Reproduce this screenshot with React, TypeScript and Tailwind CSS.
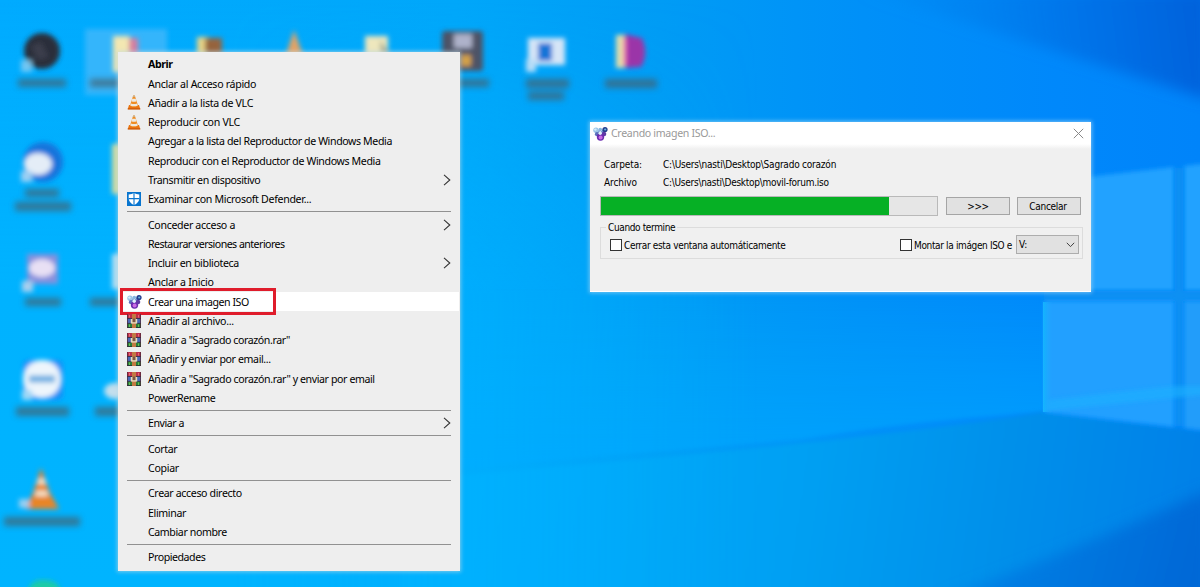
import type { ReactNode } from "react";

const menuFont = "font-['Noto_Sans','Open_Sans',sans-serif]";
const dialogFont = "font-['DejaVu_Sans_Condensed','DejaVu_Sans',sans-serif]";

function Wallpaper() {
  return (
    <svg className="absolute inset-0" width="1200" height="587" viewBox="0 0 1200 587" preserveAspectRatio="none">
      <defs>
        <linearGradient id="sky" x1="0" x2="1" y1="0" y2="0">
          <stop offset="0" stopColor="#00abff" />
          <stop offset=".38" stopColor="#00a7fa" />
          <stop offset=".55" stopColor="#009cf5" />
          <stop offset=".72" stopColor="#0090f8" />
          <stop offset=".88" stopColor="#0088fb" />
          <stop offset="1" stopColor="#0084fa" />
        </linearGradient>
        <linearGradient id="glow" x1="0" x2="0" y1="0" y2="1">
          <stop offset="0" stopColor="#00b2ff" stopOpacity="0" />
          <stop offset="1" stopColor="#00a6ff" stopOpacity=".75" />
        </linearGradient>
        <linearGradient id="floor" x1="400" x2="1200" y1="430" y2="540" gradientUnits="userSpaceOnUse">
          <stop offset="0" stopColor="#00b0ff" />
          <stop offset=".5" stopColor="#00a0f3" />
          <stop offset=".75" stopColor="#0090ea" />
          <stop offset="1" stopColor="#0080e8" />
        </linearGradient>
        <linearGradient id="corner" x1="880" x2="1200" y1="60" y2="20" gradientUnits="userSpaceOnUse">
          <stop offset="0" stopColor="#0088f0" stopOpacity=".2" />
          <stop offset=".6" stopColor="#0075ea" />
          <stop offset="1" stopColor="#0062dc" />
        </linearGradient>
        <linearGradient id="lower" x1="980" x2="1200" y1="530" y2="587" gradientUnits="userSpaceOnUse">
          <stop offset="0" stopColor="#0082e6" />
          <stop offset="1" stopColor="#0067d6" />
        </linearGradient>
        <linearGradient id="leftGlow" x1="0" x2="0" y1="0" y2="1">
          <stop offset="0" stopColor="#00b6ff" stopOpacity="0" />
          <stop offset=".5" stopColor="#00b2ff" />
          <stop offset="1" stopColor="#00b4ff" />
        </linearGradient>
        <linearGradient id="fade" x1="0" x2="1" y1="0" y2="0">
          <stop offset="0" stopColor="#fff" />
          <stop offset=".3" stopColor="#fff" />
          <stop offset="1" stopColor="#fff" stopOpacity="0" />
        </linearGradient>
        <linearGradient id="edge" x1="0" x2="1" y1="0" y2="0">
          <stop offset="0" stopColor="#16bfff" />
          <stop offset="1" stopColor="#20a4ff" stopOpacity="0" />
        </linearGradient>
        <mask id="leftMask">
          <rect width="760" height="587" fill="url(#fade)" />
        </mask>
        <filter id="soft" x="-10%" y="-10%" width="120%" height="120%">
          <feGaussianBlur stdDeviation="2" />
        </filter>
        <filter id="softer" x="-20%" y="-20%" width="140%" height="140%">
          <feGaussianBlur stdDeviation="7" />
        </filter>
      </defs>
      <rect width="1200" height="587" fill="url(#sky)" />
      <path d="M860 -10 L1210 100 V-10Z" fill="url(#corner)" filter="url(#softer)" />
      <path d="M440 290 H1044 V412 Q900 422 800 440 L440 470Z" fill="url(#glow)" filter="url(#soft)" />
      <path d="M400 480 Q860 442 1044 412 L1210 432 V600 H400Z" fill="url(#floor)" filter="url(#soft)" />
      <path d="M940 600 Q1080 548 1210 490 V600Z" fill="url(#lower)" filter="url(#softer)" />
      <rect width="760" height="587" fill="url(#leftGlow)" mask="url(#leftMask)" />
      <path d="M1044 182 L1174 167 V291 H1044Z" fill="#20a2ff" filter="url(#soft)" />
      <path d="M1184 166 L1210 163 V291 H1184Z" fill="#20a2ff" filter="url(#soft)" />
      <path d="M1044 291 H1210 V301 H1044Z M1175 168 H1183 V426 H1175Z" fill="#1090f3" filter="url(#soft)" />
      <path d="M1044 301 H1174 V427 L1044 412Z" fill="#20a0ff" filter="url(#soft)" />
      <path d="M1184 301 H1210 V431 L1184 428Z" fill="#209dfa" filter="url(#soft)" />
      <path d="M1048 400 L1174 386 H1210 V394 L1046 411Z" fill="#1cb2ff" opacity=".6" filter="url(#soft)" />
      <rect x="1043" y="302" width="10" height="110" fill="url(#edge)" opacity=".8" />
    </svg>
  );
}

function DesktopIcons() {
  return (
    <svg className="absolute inset-0" width="1200" height="587" viewBox="0 0 1200 587">
      <defs>
        <filter id="iconBlur" x="-20%" y="-20%" width="140%" height="140%">
          <feGaussianBlur stdDeviation="2.8" />
        </filter>
        <filter id="labelBlur" x="-20%" y="-60%" width="140%" height="220%">
          <feGaussianBlur stdDeviation="3" />
        </filter>
      </defs>
      <rect x="85" y="29" width="82" height="66" fill="#42b8fb" opacity=".8" filter="url(#iconBlur)" />
      <g filter="url(#iconBlur)">
        <circle cx="42" cy="51" r="18" fill="#2b2d3a" />
        <path d="M31 46 L41 42 L49 57 L38 60Z" fill="#3a3d4c" />
        <rect x="21" y="60" width="11" height="12" fill="#8dcdf0" opacity=".8" />
        <rect x="113" y="36" width="17" height="36" fill="#f3e7b2" />
        <rect x="129" y="38" width="9" height="20" fill="#d67ea0" />
        <rect x="197" y="37" width="12" height="24" fill="#e8d488" />
        <rect x="205" y="38" width="17" height="20" fill="#96643d" />
        <path d="M294 30 L304 58 H285Z" fill="#e5a363" />
        <rect x="365" y="36" width="23" height="24" fill="#eee7bd" />
        <path d="M380 40 L390 54 H381Z" fill="#a6aa94" />
        <rect x="442" y="31" width="41" height="40" rx="3" fill="#4d5266" />
        <rect x="454" y="34" width="18" height="14" fill="#aeb2ca" />
        <rect x="461" y="55" width="10" height="11" fill="#d6a347" />
        <rect x="528" y="38" width="37" height="27" fill="#d5e5f7" />
        <rect x="538" y="43" width="14" height="18" fill="#1675d7" />
        <rect x="526" y="59" width="10" height="13" fill="#b7ddf7" />
        <rect x="616" y="35" width="11" height="33" fill="#e5dfaa" />
        <path d="M624 34 L642 38 Q649 54 641 67 L624 68Z" fill="#9b35a8" />
        <path d="M625 39 V65" stroke="#ef5aae" strokeWidth="3" />
        <circle cx="43" cy="162" r="20" fill="#1675db" />
        <ellipse cx="38" cy="164" rx="14" ry="11" fill="#e4edf7" />
        <rect x="21" y="171" width="11" height="11" fill="#9bcff3" />
        <rect x="27" y="254" width="31" height="30" fill="#8790dd" />
        <ellipse cx="42" cy="268" rx="13" ry="9" fill="#e8e0f4" />
        <rect x="22" y="281" width="11" height="11" fill="#a9cfee" />
        <rect x="23" y="360" width="40" height="40" rx="5" fill="#148ff5" />
        <circle cx="42" cy="379" r="19" fill="#edf5fc" />
        <path d="M29 379 H55" stroke="#6eafe2" strokeWidth="7" />
        <rect x="22" y="390" width="10" height="10" fill="#a0d8f6" />
        <path d="M41 468 L50 493 L59 509 H25 L33 493Z" fill="#e88526" />
        <path d="M38 479 H45 L46 484 H37Z M36 491 H47 L48 496 H35Z" fill="#f5e8cf" />
        <rect x="19" y="499" width="10" height="9" fill="#9acff1" />
        <path d="M28 595 Q28 580 43 580 Q61 580 61 595Z" fill="#1bcba6" />
        <rect x="112" y="144" width="12" height="50" fill="#d4dc9f" />
        <rect x="112" y="254" width="12" height="35" fill="#b3def1" />
        <ellipse cx="115" cy="391" rx="11" ry="8" fill="#c4dfed" />
      </g>
      <g fill="#456070" opacity=".72" filter="url(#labelBlur)">
        <rect x="18" y="79" width="48" height="8" />
        <rect x="90" y="79" width="40" height="8" />
        <rect x="452" y="79" width="37" height="8" />
        <rect x="526" y="79" width="43" height="9" />
        <rect x="528" y="92" width="36" height="8" />
        <rect x="605" y="79" width="52" height="9" />
        <rect x="25" y="189" width="34" height="8" />
        <rect x="15" y="202" width="56" height="9" />
        <rect x="25" y="298" width="36" height="8" />
        <rect x="90" y="298" width="35" height="8" />
        <rect x="16" y="407" width="53" height="9" />
        <rect x="95" y="407" width="30" height="9" />
        <rect x="4" y="517" width="76" height="9" />
      </g>
    </svg>
  );
}

function ConeIcon() {
  return (
    <svg width="14" height="15" viewBox="0 0 14 15">
      <path d="M2 10 H12 L13.3 14.2 H.7Z" fill="#ea7410" />
      <path d="M6.2 .5 H7.8 L11.2 11 Q7 13 2.8 11Z" fill="#f08d24" />
      <path d="M5.3 3.7 H8.7 L9.5 6.2 Q7 7.2 4.5 6.2Z M3.9 8.4 Q7 9.7 10.1 8.4 L10.8 10.4 Q7 12.2 3.2 10.4Z" fill="#eee9de" />
      <path d="M6.2 .5 H7.8 L8.2 2 H5.8Z" fill="#c9b18d" />
      <path d="M.8 13.2 H13.2 V14.5 H.8Z" fill="#cd5b0b" />
    </svg>
  );
}

function DefenderIcon() {
  return (
    <svg width="14" height="14" viewBox="0 0 14 14">
      <rect width="14" height="14" fill="#0875cf" />
      <path d="M7 1 Q9 2.4 12.3 2.5 V7 Q11.5 11 7 13 Q2.5 11 1.7 7 V2.5 Q5 2.4 7 1Z" fill="#fff" />
      <path d="M7 1 V13 M1.5 6.6 H12.5" stroke="#0875cf" strokeWidth="1.1" />
    </svg>
  );
}

function IsoIcon() {
  return (
    <svg width="15" height="15" viewBox="0 0 15 15">
      <path d="M3 4 L7.5 8 L12 3.5 M7.5 8 V12" stroke="#6f8fd0" strokeWidth="3" fill="none" />
      <circle cx="3" cy="4.3" r="2.7" fill="#9cc6e8" />
      <circle cx="2.4" cy="3.6" r="1.2" fill="#d8eefb" />
      <circle cx="7.3" cy="3.6" r="1.8" fill="#86b6df" />
      <circle cx="12" cy="3.5" r="2.6" fill="#233b8e" />
      <circle cx="12.2" cy="3.5" r="1.1" fill="#66b4dc" />
      <circle cx="4" cy="8.2" r="2.1" fill="#5a70bd" />
      <circle cx="11" cy="8" r="2.3" fill="#5f3ca4" />
      <circle cx="7.5" cy="11" r="3.7" fill="#6b2daf" />
      <circle cx="7.6" cy="11.4" r="2" fill="#ca6be5" />
      <circle cx="7.2" cy="7.2" r="1.7" fill="#dff2fc" />
    </svg>
  );
}

function RarIcon() {
  return (
    <svg width="14" height="14" viewBox="0 0 14 14">
      <rect width="14" height="4.6" fill="#bc304a" />
      <rect y="4.6" width="14" height="4.8" fill="#4b69b6" />
      <rect y="9.4" width="14" height="4.6" fill="#278039" />
      <path d="M0 4.5 H14 M0 9.4 H14 M0 13.6 H14" stroke="#26253b" strokeWidth=".8" />
      <path d="M.4 0 V14 M13.6 0 V14" stroke="#4c2738" strokeWidth=".8" />
      <rect x="5" width="4" height="14" fill="#c17a43" />
      <rect x="3.8" y="5" width="6.4" height="4.6" fill="#e9ddbd" />
      <rect x="5.5" y="4.6" width="3" height="3.6" fill="#7d5540" />
      <path d="M2.5 1 V3.6 M11.5 1 V3.6" stroke="#e16b78" />
      <path d="M2.5 10.4 V13 M11.5 10.4 V13" stroke="#69bd56" />
    </svg>
  );
}

type Item = { label: string; tracking: string; icon?: ReactNode; arrow?: boolean; bold?: boolean; active?: boolean };

const groups: Item[][] = [
  [
    { label: "Abrir", tracking: "tracking-[-0.45px]", bold: true },
    { label: "Anclar al Acceso rápido", tracking: "tracking-[-0.3px]" },
    { label: "Añadir a la lista de VLC", tracking: "tracking-[-0.31px]", icon: <ConeIcon /> },
    { label: "Reproducir con VLC", tracking: "tracking-[-0.27px]", icon: <ConeIcon /> },
    { label: "Agregar a la lista del Reproductor de Windows Media", tracking: "tracking-[-0.38px]" },
    { label: "Reproducir con el Reproductor de Windows Media", tracking: "tracking-[-0.36px]" },
    { label: "Transmitir en dispositivo", tracking: "tracking-[-0.39px]", arrow: true },
    { label: "Examinar con Microsoft Defender...", tracking: "tracking-[-0.31px]", icon: <DefenderIcon /> },
  ],
  [
    { label: "Conceder acceso a", tracking: "tracking-[-0.33px]", arrow: true },
    { label: "Restaurar versiones anteriores", tracking: "tracking-[-0.53px]" },
    { label: "Incluir en biblioteca", tracking: "tracking-[-0.34px]", arrow: true },
    { label: "Anclar a Inicio", tracking: "tracking-[-0.3px]" },
    { label: "Crear una imagen ISO", tracking: "tracking-[-0.45px]", icon: <IsoIcon />, active: true },
    { label: "Añadir al archivo...", tracking: "tracking-[-0.3px]", icon: <RarIcon /> },
    { label: 'Añadir a "Sagrado corazón.rar"', tracking: "tracking-[-0.41px]", icon: <RarIcon /> },
    { label: "Añadir y enviar por email...", tracking: "tracking-[-0.38px]", icon: <RarIcon /> },
    { label: 'Añadir a "Sagrado corazón.rar" y enviar por email', tracking: "tracking-[-0.4px]", icon: <RarIcon /> },
    { label: "PowerRename", tracking: "tracking-[-0.45px]" },
  ],
  [{ label: "Enviar a", tracking: "tracking-[-0.45px]", arrow: true }],
  [
    { label: "Cortar", tracking: "tracking-[-0.38px]" },
    { label: "Copiar", tracking: "tracking-[-0.3px]" },
  ],
  [
    { label: "Crear acceso directo", tracking: "tracking-[-0.36px]" },
    { label: "Eliminar", tracking: "tracking-[-0.35px]" },
    { label: "Cambiar nombre", tracking: "tracking-[-0.39px]" },
  ],
  [{ label: "Propiedades", tracking: "tracking-[-0.45px]" }],
];

function MenuRow({ item }: { item: Item }) {
  return (
    <div className={`relative mr-px ml-0.5 flex h-[19.25px] items-center pr-2 pl-[7px] ${item.active ? "bg-white" : ""}`}>
      <span className="flex w-[21px] shrink-0 items-center">{item.icon}</span>
      <span className={`grow pt-px whitespace-nowrap ${item.tracking} ${item.bold ? "font-bold" : ""}`}>{item.label}</span>
      {item.arrow && (
        <svg width="8" height="12" viewBox="0 0 8 12">
          <path d="M1 .8 L6.8 6 L1 11.2" fill="none" stroke="#333" strokeWidth="1.1" />
        </svg>
      )}
      {item.active && <span className="absolute top-[-4px] left-0 h-[27px] w-[156px] border-3 border-[#df1c2b]" />}
    </div>
  );
}

function ContextMenu() {
  return (
    <div className={`absolute top-[52px] left-[118px] h-[519px] w-[342px] bg-[#eeeeee] pt-[2.7px] text-[10.6px] leading-[19px] text-black shadow-[0_0_4px_1px_rgba(190,220,230,0.65)] ${menuFont}`}>
      {groups.map((group, i) => (
        <div key={i}>
          {i > 0 && (
            <div className="flex h-[6.2px] items-center px-[9px]">
              <div className="h-px w-full bg-[#919191]" />
            </div>
          )}
          {group.map((item) => (
            <MenuRow key={item.label} item={item} />
          ))}
        </div>
      ))}
    </div>
  );
}

function Dialog() {
  return (
    <div className={`absolute top-[122px] left-[590px] flex h-[170px] w-[501px] flex-col border-b border-white bg-[#f0f0f0] text-[10px] text-black shadow-[0_0_4px_1px_rgba(150,210,245,0.75)] ${dialogFont}`}>
      <div className="flex h-[22px] shrink-0 items-center bg-white pr-[7px] pl-[3px]">
        <IsoIcon />
        <span className={`ml-[3px] grow pt-px text-[10.6px] tracking-[-0.33px] text-[#999] ${menuFont}`}>Creando imagen ISO...</span>
        <svg width="11" height="11" viewBox="0 0 11 11">
          <path d="M.8 .8 L10.2 10.2 M10.2 .8 L.8 10.2" stroke="#888" strokeWidth="1" />
        </svg>
      </div>
      <div className="h-[5px] shrink-0 bg-gradient-to-b from-white to-[#f0f0f0]" />
      <div className="mt-[7px] ml-[14px] grid shrink-0 grid-cols-[59px_1fr] leading-[18px]">
        <span className="tracking-[-0.1px]">Carpeta:</span>
        <span className="tracking-[-0.22px]">C:\Users\nasti\Desktop\Sagrado corazón</span>
        <span className="tracking-[-0.1px]">Archivo</span>
        <span className="tracking-[-0.27px]">C:\Users\nasti\Desktop\movil-forum.iso</span>
      </div>
      <div className="mt-[4px] ml-[10px] flex shrink-0 items-center">
        <div className="h-5 w-[338px] border border-[#b9b9b9] bg-[#e6e6e6]">
          <div className="h-full w-[288px] bg-[#06b025]" />
        </div>
        <button className="ml-2 h-[18px] w-16 border border-[#a5a5a5] bg-[#e1e1e1] text-center leading-[17px] tracking-[-0.3px]">&gt;&gt;&gt;</button>
        <button className="ml-[7px] h-[18px] w-16 border border-[#a5a5a5] bg-[#e1e1e1] pr-0.5 text-center leading-[17px] tracking-[-0.3px]">Cancelar</button>
      </div>
      <div className="relative mt-[11px] ml-[10px] flex h-[32px] w-[483px] shrink-0 items-center border border-[#dcdcdc] pt-[3px] pr-[3px] pl-[9px]">
        <span className="absolute top-[-8px] left-[5px] bg-[#f0f0f0] px-[2px] leading-4 tracking-[-0.37px]">Cuando termine</span>
        <span className="size-3 border border-[#333] bg-white" />
        <span className="ml-0.5 grow pt-px tracking-[-0.33px]">Cerrar esta ventana automáticamente</span>
        <span className="size-3 border border-[#333] bg-white" />
        <span className="ml-0.5 pt-px tracking-[-0.36px]">Montar la imágen ISO e</span>
        <span className="ml-1 flex h-[19px] w-[63px] items-center justify-between border border-[#adadad] bg-[#e1e1e1] pr-[3px] pl-[2px]">
          V:
          <svg width="9" height="6" viewBox="0 0 9 6">
            <path d="M.8 .8 L4.5 4.6 L8.2 .8" fill="none" stroke="#444" strokeWidth="1" />
          </svg>
        </span>
      </div>
    </div>
  );
}

export default function App() {
  return (
    <main className="relative h-[587px] w-[1200px] overflow-hidden bg-[#00a8fc]">
      <Wallpaper />
      <DesktopIcons />
      <ContextMenu />
      <Dialog />
    </main>
  );
}
